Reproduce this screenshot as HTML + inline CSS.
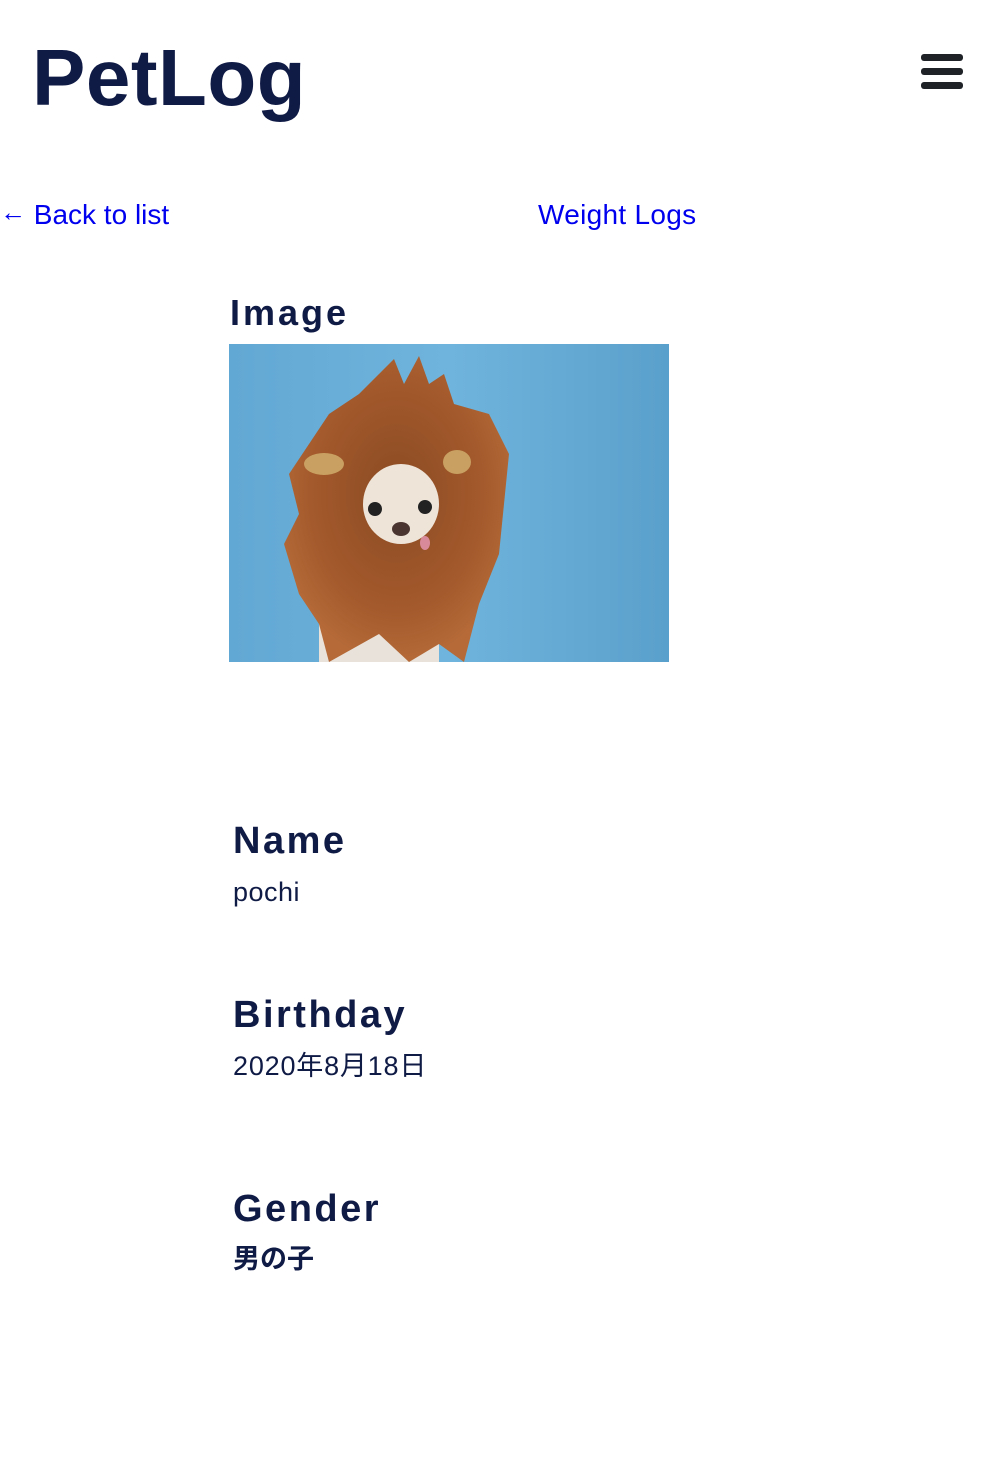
<!DOCTYPE html>
<html><head><meta charset="utf-8"><style>
body{margin:0;width:990px;height:1462px;background:#fff;position:relative;font-family:"Liberation Sans","Noto Sans CJK JP",sans-serif;color:#0f1a45;overflow:hidden}
.a{position:absolute;white-space:nowrap}
.logo{left:32px;top:28px;font-size:80px;font-weight:bold;line-height:100px;letter-spacing:0.5px}
.bar{position:absolute;left:921px;width:42px;height:7px;border-radius:3px;background:#1f2328}
.lk{color:#0000ee;font-size:28px;line-height:34px;top:198px}
.h{font-size:38px;font-weight:bold;line-height:44px;left:233px;letter-spacing:2.5px}
.v{font-size:27px;line-height:34px;left:233px;color:#0f1a45}
</style></head><body>
<div class="a logo">PetLog</div>
<div class="bar" style="top:54px"></div>
<div class="bar" style="top:68px"></div>
<div class="bar" style="top:82px"></div>
<div class="a lk" style="left:0"><span style="position:relative;top:-3px;font-size:26px">←</span> Back to list</div>
<div class="a lk" style="left:538px;letter-spacing:0.3px">Weight Logs</div>
<div class="a" style="left:230px;top:292px;font-size:36px;font-weight:bold;line-height:42px;letter-spacing:3px">Image</div>
<svg class="a" style="left:229px;top:344px" width="440" height="318" viewBox="0 0 440 318">
<defs><linearGradient id="bg" x1="0" y1="0" x2="1" y2="0"><stop offset="0" stop-color="#62a8d4"/><stop offset="0.5" stop-color="#6fb4dc"/><stop offset="1" stop-color="#5aa0cc"/></linearGradient>
<radialGradient id="m" cx="0.5" cy="0.45" r="0.55"><stop offset="0" stop-color="#8a4a22"/><stop offset="0.7" stop-color="#a45a2c"/><stop offset="1" stop-color="#b56a38"/></radialGradient></defs>
<rect width="440" height="318" fill="url(#bg)"/>
<rect x="90" y="270" width="120" height="48" fill="#e8e2da"/>
<path d="M150 30 L165 15 L175 40 L190 12 L200 40 L215 30 L225 60 L260 70 L280 110 L275 160 L270 210 L250 260 L235 318 L210 300 L180 318 L150 290 L100 318 L90 280 L70 250 L55 200 L70 170 L60 130 L80 100 L100 70 L130 50 Z" fill="url(#m)"/>
<ellipse cx="95" cy="120" rx="20" ry="11" fill="#c9a062"/>
<ellipse cx="228" cy="118" rx="14" ry="12" fill="#c9a062"/>
<ellipse cx="172" cy="160" rx="38" ry="40" fill="#eee4d8"/>
<circle cx="146" cy="165" r="7" fill="#222"/><circle cx="196" cy="163" r="7" fill="#222"/>
<ellipse cx="172" cy="185" rx="9" ry="7" fill="#4a3530"/>
<ellipse cx="196" cy="199" rx="5" ry="7" fill="#d98a9a"/>
</svg>
<div class="a h" style="top:819px">Name</div>
<div class="a v" style="top:875px;letter-spacing:0.5px">pochi</div>
<div class="a h" style="top:993px">Birthday</div>
<div class="a v" style="top:1049px;letter-spacing:0.8px">2020年8月18日</div>
<div class="a h" style="top:1187px">Gender</div>
<div class="a v" style="top:1242px;font-weight:bold">男の子</div>
</body></html>
